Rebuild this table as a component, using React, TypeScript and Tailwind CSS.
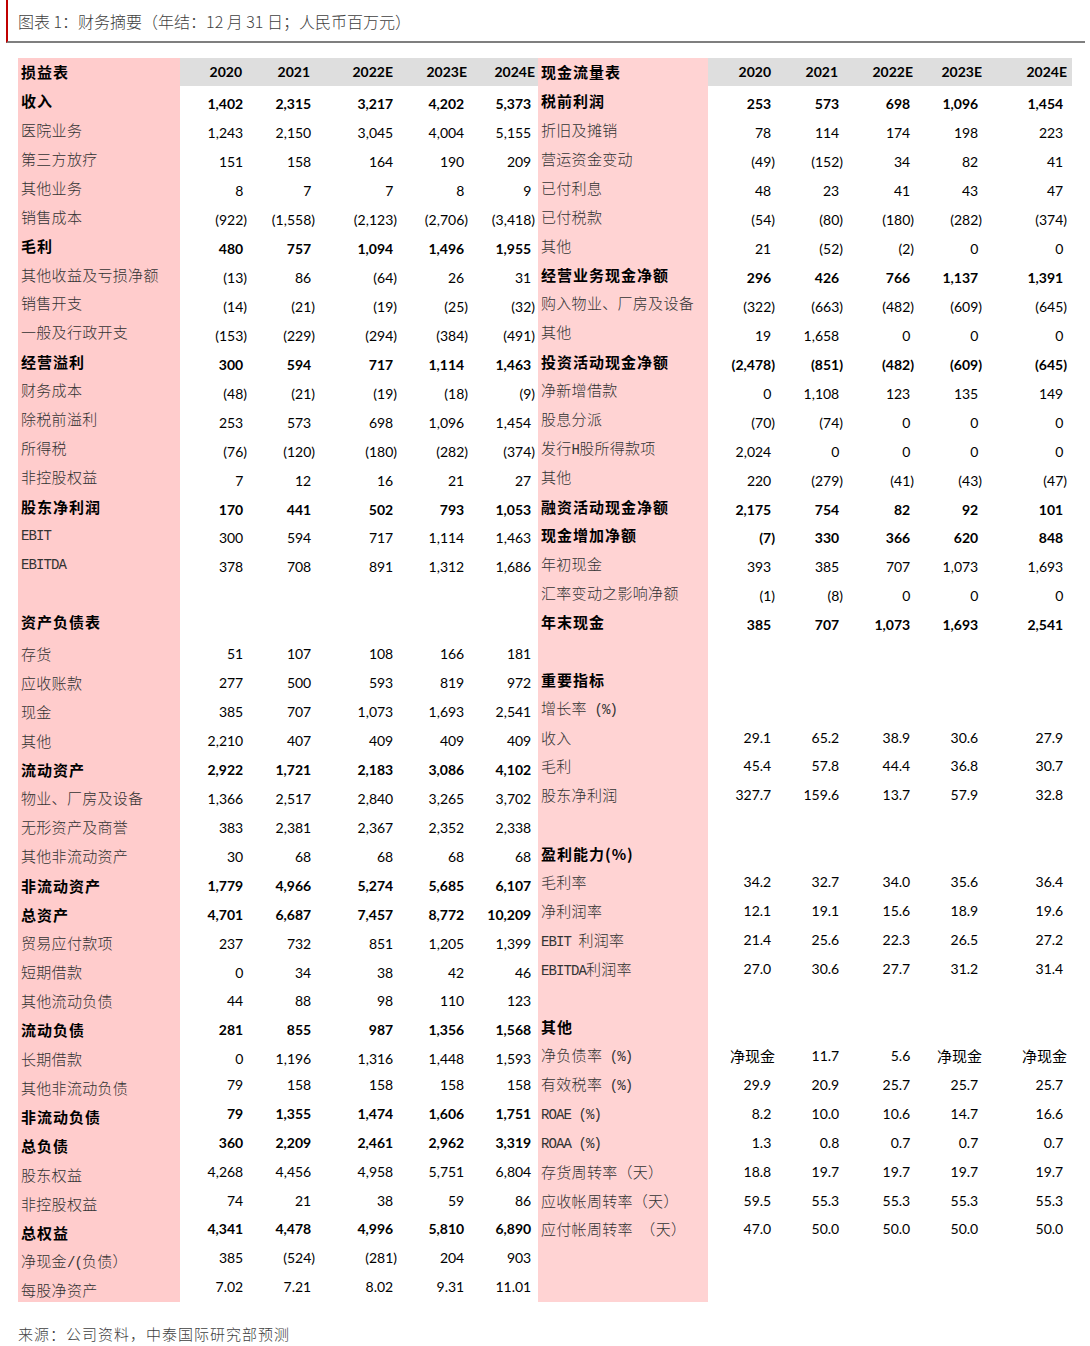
import React from "react";

type Row = { l: string; b?: boolean; v?: string[] };

const years = ["2020", "2021", "2022E", "2023E", "2024E"];

const leftRows: Row[] = [
  { l: "收入", b: true, v: ["1,402", "2,315", "3,217", "4,202", "5,373"] },
  { l: "医院业务", v: ["1,243", "2,150", "3,045", "4,004", "5,155"] },
  { l: "第三方放疗", v: ["151", "158", "164", "190", "209"] },
  { l: "其他业务", v: ["8", "7", "7", "8", "9"] },
  { l: "销售成本", v: ["(922)", "(1,558)", "(2,123)", "(2,706)", "(3,418)"] },
  { l: "毛利", b: true, v: ["480", "757", "1,094", "1,496", "1,955"] },
  { l: "其他收益及亏损净额", v: ["(13)", "86", "(64)", "26", "31"] },
  { l: "销售开支", v: ["(14)", "(21)", "(19)", "(25)", "(32)"] },
  { l: "一般及行政开支", v: ["(153)", "(229)", "(294)", "(384)", "(491)"] },
  { l: "经营溢利", b: true, v: ["300", "594", "717", "1,114", "1,463"] },
  { l: "财务成本", v: ["(48)", "(21)", "(19)", "(18)", "(9)"] },
  { l: "除税前溢利", v: ["253", "573", "698", "1,096", "1,454"] },
  { l: "所得税", v: ["(76)", "(120)", "(180)", "(282)", "(374)"] },
  { l: "非控股权益", v: ["7", "12", "16", "21", "27"] },
  { l: "股东净利润", b: true, v: ["170", "441", "502", "793", "1,053"] },
  { l: "EBIT", v: ["300", "594", "717", "1,114", "1,463"] },
  { l: "EBITDA", v: ["378", "708", "891", "1,312", "1,686"] },
  { l: "" },
  { l: "资产负债表", b: true },
  { l: "存货", v: ["51", "107", "108", "166", "181"] },
  { l: "应收账款", v: ["277", "500", "593", "819", "972"] },
  { l: "现金", v: ["385", "707", "1,073", "1,693", "2,541"] },
  { l: "其他", v: ["2,210", "407", "409", "409", "409"] },
  { l: "流动资产", b: true, v: ["2,922", "1,721", "2,183", "3,086", "4,102"] },
  { l: "物业、厂房及设备", v: ["1,366", "2,517", "2,840", "3,265", "3,702"] },
  { l: "无形资产及商誉", v: ["383", "2,381", "2,367", "2,352", "2,338"] },
  { l: "其他非流动资产", v: ["30", "68", "68", "68", "68"] },
  { l: "非流动资产", b: true, v: ["1,779", "4,966", "5,274", "5,685", "6,107"] },
  { l: "总资产", b: true, v: ["4,701", "6,687", "7,457", "8,772", "10,209"] },
  { l: "贸易应付款项", v: ["237", "732", "851", "1,205", "1,399"] },
  { l: "短期借款", v: ["0", "34", "38", "42", "46"] },
  { l: "其他流动负债", v: ["44", "88", "98", "110", "123"] },
  { l: "流动负债", b: true, v: ["281", "855", "987", "1,356", "1,568"] },
  { l: "长期借款", v: ["0", "1,196", "1,316", "1,448", "1,593"] },
  { l: "其他非流动负债", v: ["79", "158", "158", "158", "158"] },
  { l: "非流动负债", b: true, v: ["79", "1,355", "1,474", "1,606", "1,751"] },
  { l: "总负债", b: true, v: ["360", "2,209", "2,461", "2,962", "3,319"] },
  { l: "股东权益", v: ["4,268", "4,456", "4,958", "5,751", "6,804"] },
  { l: "非控股权益", v: ["74", "21", "38", "59", "86"] },
  { l: "总权益", b: true, v: ["4,341", "4,478", "4,996", "5,810", "6,890"] },
  { l: "净现金/(负债）", v: ["385", "(524)", "(281)", "204", "903"] },
  { l: "每股净资产", v: ["7.02", "7.21", "8.02", "9.31", "11.01"] },
];

const rightRows: Row[] = [
  { l: "税前利润", b: true, v: ["253", "573", "698", "1,096", "1,454"] },
  { l: "折旧及摊销", v: ["78", "114", "174", "198", "223"] },
  { l: "营运资金变动", v: ["(49)", "(152)", "34", "82", "41"] },
  { l: "已付利息", v: ["48", "23", "41", "43", "47"] },
  { l: "已付税款", v: ["(54)", "(80)", "(180)", "(282)", "(374)"] },
  { l: "其他", v: ["21", "(52)", "(2)", "0", "0"] },
  { l: "经营业务现金净额", b: true, v: ["296", "426", "766", "1,137", "1,391"] },
  { l: "购入物业、厂房及设备", v: ["(322)", "(663)", "(482)", "(609)", "(645)"] },
  { l: "其他", v: ["19", "1,658", "0", "0", "0"] },
  { l: "投资活动现金净额", b: true, v: ["(2,478)", "(851)", "(482)", "(609)", "(645)"] },
  { l: "净新增借款", v: ["0", "1,108", "123", "135", "149"] },
  { l: "股息分派", v: ["(70)", "(74)", "0", "0", "0"] },
  { l: "发行H股所得款项", v: ["2,024", "0", "0", "0", "0"] },
  { l: "其他", v: ["220", "(279)", "(41)", "(43)", "(47)"] },
  { l: "融资活动现金净额", b: true, v: ["2,175", "754", "82", "92", "101"] },
  { l: "现金增加净额", b: true, v: ["(7)", "330", "366", "620", "848"] },
  { l: "年初现金", v: ["393", "385", "707", "1,073", "1,693"] },
  { l: "汇率变动之影响净额", v: ["(1)", "(8)", "0", "0", "0"] },
  { l: "年末现金", b: true, v: ["385", "707", "1,073", "1,693", "2,541"] },
  { l: "" },
  { l: "重要指标", b: true },
  { l: "增长率 (%)" },
  { l: "收入", v: ["29.1", "65.2", "38.9", "30.6", "27.9"] },
  { l: "毛利", v: ["45.4", "57.8", "44.4", "36.8", "30.7"] },
  { l: "股东净利润", v: ["327.7", "159.6", "13.7", "57.9", "32.8"] },
  { l: "" },
  { l: "盈利能力(%)", b: true },
  { l: "毛利率", v: ["34.2", "32.7", "34.0", "35.6", "36.4"] },
  { l: "净利润率", v: ["12.1", "19.1", "15.6", "18.9", "19.6"] },
  { l: "EBIT 利润率", v: ["21.4", "25.6", "22.3", "26.5", "27.2"] },
  { l: "EBITDA利润率", v: ["27.0", "30.6", "27.7", "31.2", "31.4"] },
  { l: "" },
  { l: "其他", b: true },
  { l: "净负债率 (%)", v: ["净现金", "11.7", "5.6", "净现金", "净现金"] },
  { l: "有效税率 (%)", v: ["29.9", "20.9", "25.7", "25.7", "25.7"] },
  { l: "ROAE (%)", v: ["8.2", "10.0", "10.6", "14.7", "16.6"] },
  { l: "ROAA (%)", v: ["1.3", "0.8", "0.7", "0.7", "0.7"] },
  { l: "存货周转率（天）", v: ["18.8", "19.7", "19.7", "19.7", "19.7"] },
  { l: "应收帐周转率（天）", v: ["59.5", "55.3", "55.3", "55.3", "55.3"] },
  { l: "应付帐周转率 （天）", v: ["47.0", "50.0", "50.0", "50.0", "50.0"] },
  { l: "" },
  { l: "" },
];

const cjk = "font-['Noto_Sans_CJK_SC',sans-serif]";
const num = "font-['Lato','Noto_Sans_CJK_SC',sans-serif]";

// regular labels: CJK text plus half-width latin like the SimSun original
function Label({ text, bold }: { text: string; bold?: boolean }) {
  if (bold) {
    return (
      <span className={`${cjk} text-[15px] font-bold tracking-[1px] text-black leading-none whitespace-nowrap`}>
        {text}
      </span>
    );
  }
  const parts = text.split(/([ -~]+)/).filter((p) => p !== "");
  return (
    <span className="leading-none whitespace-nowrap text-[#333333]">
      {parts.map((p, i) =>
        /^[ -~]+$/.test(p) ? (
          <span
            key={i}
            className="font-['Liberation_Mono',monospace] text-[14px] tracking-[-0.9px] whitespace-pre"
          >
            {p}
          </span>
        ) : (
          <span key={i} className={`${cjk} text-[15px] font-light tracking-[0.3px]`}>
            {p}
          </span>
        )
      )}
    </span>
  );
}

function Value({ v, bold }: { v: string; bold?: boolean }) {
  const isNum = /^[\d(]/.test(v);
  if (!isNum) {
    return <span className={`${cjk} text-[15px] text-black leading-none`}>{v}</span>;
  }
  const neg = v.startsWith("(");
  return (
    <span className={`${num} text-[14px] text-black leading-none ${bold ? "font-bold" : ""}`}>
      {v}
      {!neg && <span className="invisible">)</span>}
    </span>
  );
}

function Table({
  title,
  rows,
  labelCls,
  cols,
  hdrPad,
  restCls,
  numShiftUntil,
  labelShiftFrom,
}: {
  title: string;
  rows: Row[];
  labelCls: string;
  cols: string[];
  hdrPad: string[];
  restCls: string;
  numShiftUntil: number;
  labelShiftFrom: number;
}) {
  return (
    <div className="flex flex-col">
      {/* header */}
      <div className="flex h-[28.95px]">
        <div className={`${labelCls} flex items-center pl-[3px]`}>
          <Label text={title} bold />
        </div>
        <div className="flex bg-[#dedede]">
          {years.map((y, i) => (
            <div key={y} className={`${cols[i]} ${hdrPad[i]} flex items-center justify-end`}>
              <span className={`${num} text-[14px] font-bold text-black leading-none`}>{y}</span>
            </div>
          ))}
          <div className={restCls} />
        </div>
      </div>
      {rows.map((r, ri) => {
        const idx = ri + 1;
        return (
          <div key={ri} className="flex h-[28.95px]">
            <div
              className={`${labelCls} flex items-center pl-[3px] ${idx >= labelShiftFrom ? "pt-[6px]" : ""}`}
            >
              {r.l && <Label text={r.l} bold={r.b} />}
            </div>
            <div className="flex">
              {r.v &&
                r.v.map((v, i) => (
                  <div
                    key={i}
                    className={`${cols[i]} flex items-center justify-end ${idx <= numShiftUntil ? "pt-[7px]" : ""}`}
                  >
                    <Value v={v} bold={r.b} />
                  </div>
                ))}
            </div>
          </div>
        );
      })}
    </div>
  );
}

export default function App() {
  return (
    <div className="w-[1090px] h-[1346px] bg-white overflow-hidden">
      {/* title bar */}
      <div className="ml-[6px] mr-[5px] h-[43px] border-l-2 border-l-[#c00000] border-b-2 border-b-[#7f7f7f] flex items-center pl-[10px]">
        <span className={`${cjk} text-[16px] font-light text-[#404040]`}>
          图表 1：财务摘要（年结：12 月 31 日；人民币百万元）
        </span>
      </div>

      <div className="flex ml-[18px] mt-[14.5px]">
        <Table
          title="损益表"
          rows={leftRows}
          labelCls="w-[162px] bg-[#ffcccc]"
          cols={["w-[67px]", "w-[68px]", "w-[82px]", "w-[71px]", "w-[67px]"]}
          hdrPad={["pr-[5px]", "pr-[5px]", "pr-[4px]", "pr-[1px]", "pr-0"]}
          restCls="w-[3px]"
          numShiftUntil={34}
          labelShiftFrom={20}
        />
        <Table
          title="现金流量表"
          rows={rightRows}
          labelCls="w-[170px] bg-[#ffd3d3]"
          cols={["w-[67px]", "w-[68px]", "w-[71px]", "w-[68px]", "w-[85px]"]}
          hdrPad={["pr-[4px]", "pr-[5px]", "pr-[1px]", "pr-0", "pr-0"]}
          restCls="w-[5px]"
          numShiftUntil={19}
          labelShiftFrom={99}
        />
      </div>

      <div className="ml-[18px] mt-[20px]">
        <span className={`${cjk} text-[15px] font-light text-[#404040] tracking-[1px]`}>
          来源：公司资料，中泰国际研究部预测
        </span>
      </div>
    </div>
  );
}
